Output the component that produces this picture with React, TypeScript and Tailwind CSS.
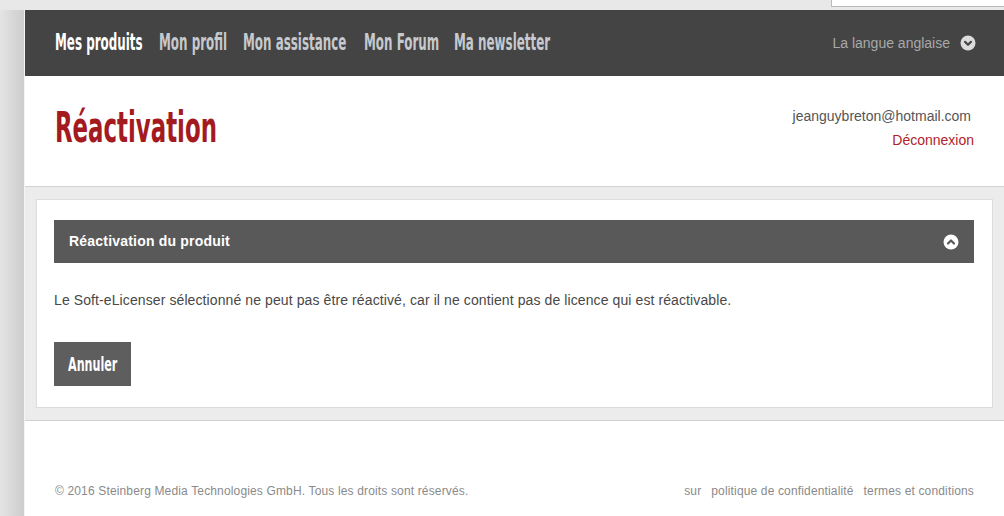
const condensed = { fontFamily: '"DejaVu Sans Condensed", "Liberation Sans", sans-serif' };
const arial = { fontFamily: '"Liberation Sans", Arial, sans-serif' };

// Oswald-like narrow heading text: a condensed face squeezed into the width the original takes
function Narrow({ children, width, className = '' }: { children: string; width: number; className?: string }) {
  return (
    <span className="inline-block overflow-visible whitespace-nowrap" style={{ width }}>
      <span className={`inline-block origin-left font-bold ${className}`} style={condensed}>
        {children}
      </span>
    </span>
  );
}

function CircleChevron({ up = false, fill, stroke }: { up?: boolean; fill: string; stroke: string }) {
  return (
    <svg width="16" height="16" viewBox="0 0 16 16">
      <circle cx="8" cy="8" r="7.5" fill={fill} />
      <path
        d={up ? 'M5 9.5 L8 6.5 L11 9.5' : 'M5 6.8 L8 9.8 L11 6.8'}
        fill="none"
        stroke={stroke}
        strokeWidth="2.2"
        strokeLinecap="round"
        strokeLinejoin="round"
      />
    </svg>
  );
}

const navItems = [
  { label: 'Mes produits', w: 88 },
  { label: 'Mon profil', w: 68 },
  { label: 'Mon assistance', w: 105 },
  { label: 'Mon Forum', w: 74 },
  { label: 'Ma newsletter', w: 98 },
];

export default function App() {
  return (
    <div className="flex h-[516px] w-full overflow-hidden bg-[#e8e8e8]" style={arial}>
      <div className="w-[24px] shrink-0 flex flex-col">
        <div className="h-[10px] bg-[#e8e8e8]" />
        <div className="flex-1 bg-gradient-to-r from-[#e4e4e4] to-[#cdcdcd]" />
      </div>

      <div className="flex-1 flex flex-col min-w-0">
        <div className="relative h-[10px] bg-[#e8e8e8]">
          <div className="absolute right-0 top-0 h-[7px] w-[173px] bg-white border-l border-b border-[#b9b9b9]" />
        </div>

        <div className="flex-1 flex flex-col border-l border-[#f4f4f4] bg-white">
          {/* top navigation */}
          <nav className="h-[66px] bg-[#444444] flex items-center pl-[30px] pr-[28px]">
            <div className="flex items-center gap-[16px] pb-[2px]">
              {navItems.map((item, i) => (
                <Narrow
                  key={item.label}
                  width={item.w}
                  className={`scale-x-[0.575] text-[23px] leading-[28px] ${i === 0 ? 'text-white' : 'text-[#c6c9cd]'}`}
                >
                  {item.label}
                </Narrow>
              ))}
            </div>
            <div className="ml-auto flex items-center gap-[10px]">
              <span className="text-[14px] text-[#a9a9a9]">La langue anglaise</span>
              <CircleChevron fill="#dcdcdc" stroke="#444444" />
            </div>
          </nav>

          {/* page heading */}
          <header className="h-[111px] flex justify-between pl-[30px] pr-[30px] border-b border-[#d2d2d2]">
            <h1 className="mt-[27px] leading-[50px]">
              <Narrow width={161} className="scale-x-[0.605] text-[42px] text-[#a31a1f]">
                Réactivation
              </Narrow>
            </h1>
            <div className="mt-[28px] flex flex-col items-end text-[14px] leading-[24px]">
              <span className="text-[#555555] mr-[3px]">jeanguybreton@hotmail.com</span>
              <a className="text-[#b1232a]">Déconnexion</a>
            </div>
          </header>

          {/* content */}
          <main className="bg-[#ececec] pt-[12px] pb-[12px] pl-[11px] pr-[11px] border-b border-[#d0d0d0]">
            <div className="bg-white border border-[#dcdcdc] pt-[20px] pb-[21px] pl-[17px] pr-[18px]">
              <div className="h-[43px] bg-[#595959] flex items-center justify-between pl-[15px] pr-[15px]">
                <span className="text-[14px] font-bold text-white tracking-[0.2px]">Réactivation du produit</span>
                <CircleChevron up fill="#ffffff" stroke="#595959" />
              </div>
              <p className="mt-[28px] text-[14px] leading-[18px] text-[#484848] tracking-[0.1px]">
                Le Soft-eLicenser sélectionné ne peut pas être réactivé, car il ne contient pas de licence qui est réactivable.
              </p>
              <button className="mt-[33px] h-[44px] w-[77px] bg-[#5e5e5e] text-white text-left pl-[14px]">
                <Narrow width={49} className="scale-x-[0.62] text-[20px]">
                  Annuler
                </Narrow>
              </button>
            </div>
          </main>

          {/* footer */}
          <footer className="flex-1 flex items-start justify-between pl-[30px] pr-[30px] pt-[61px] text-[12px] text-[#8a8a8a] tracking-[0.15px]">
            <span>© 2016 Steinberg Media Technologies GmbH. Tous les droits sont réservés.</span>
            <div className="flex gap-[10px]">
              <span>sur</span>
              <span>politique de confidentialité</span>
              <span>termes et conditions</span>
            </div>
          </footer>
        </div>
      </div>
    </div>
  );
}
